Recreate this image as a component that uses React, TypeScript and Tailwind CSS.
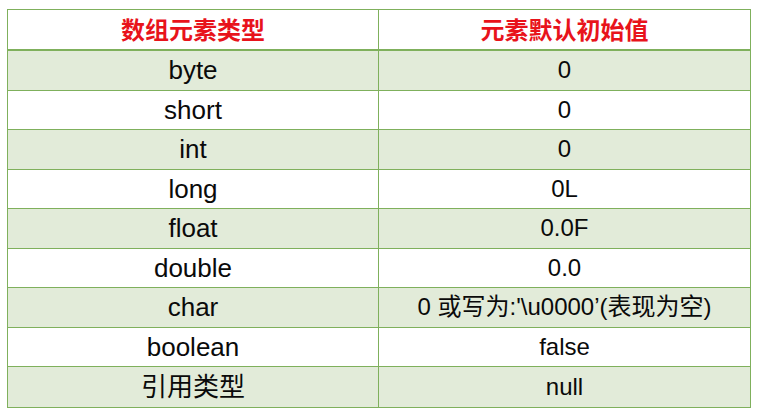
const ROWS: [string, string][] = [
  ['byte', '0'],
  ['short', '0'],
  ['int', '0'],
  ['long', '0L'],
  ['float', '0.0F'],
  ['double', '0.0'],
  ['char', "0 或写为:'\\u0000’(表现为空)"],
  ['boolean', 'false'],
  ['引用类型', 'null'],
]

export default function App() {
  return (
    <div className="w-[767px] h-[410px] bg-white pt-[9px] pl-[7px] font-['Liberation_Sans','Noto_Sans_CJK_SC',sans-serif]">
      <div className="w-[744px] border border-[#7fb05c]">
        {/* header */}
        <div className="grid grid-cols-2 h-[41px] border-b-2 border-[#7fb05c] bg-white">
          {['数组元素类型', '元素默认初始值'].map((h, i) => (
            <div
              key={h}
              className={`flex items-center justify-center pb-[2px] text-[24px] font-bold text-[#e8131b] font-['Noto_Sans_CJK_SC',sans-serif] ${i === 0 ? 'border-r border-[#7fb05c]' : ''}`}
            >
              {h}
            </div>
          ))}
        </div>

        {/* rows */}
        {ROWS.map(([type, value], i) => (
          <div
            key={type}
            className={`grid grid-cols-2 h-[39.5px] text-[#0a0a0a] ${i % 2 === 0 ? 'bg-[#e2ebd9]' : 'bg-white'} ${i < ROWS.length - 1 ? 'border-b border-[#7fb05c]' : ''}`}
          >
            <div className="flex items-center justify-center border-r border-[#7fb05c] leading-none text-[26px]">{type}</div>
            <div className="flex items-center justify-center leading-none text-[24px]">{value}</div>
          </div>
        ))}
      </div>
    </div>
  )
}
